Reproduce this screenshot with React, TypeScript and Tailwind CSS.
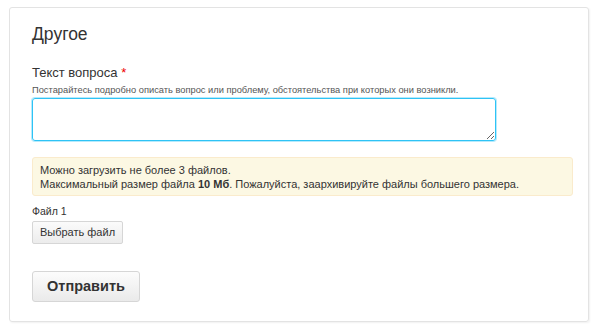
import React from 'react';

const App: React.FC = () => {
  return (
    <div className="w-[600px] h-[330px] bg-white pt-[7px] pl-[9px] font-['Liberation_Sans',Arial,sans-serif] text-[#333]">
      <div className="w-[580px] h-[315px] border border-[#e3e3e3] rounded-[3px] shadow-[1px_1px_2px_rgba(0,0,0,0.06)] pl-[22px] pt-[15px]">
        <h2 className="text-[17.5px] leading-[22px] text-[#333]">Другое</h2>

        <label className="block mt-[20px] text-[13px] leading-[16px]">
          Текст вопроса <span className="text-[#e00]">*</span>
        </label>
        <p className="mt-[4px] text-[9.3px] leading-[11px] text-[#555]">
          Постарайтесь подробно описать вопрос или проблему, обстоятельства при которых они возникли.
        </p>
        <textarea className="block mt-[2px] w-[464px] h-[43px] border border-[#2ec3f5] rounded-[3px] shadow-[0_0_0_1px_rgba(46,195,245,0.35)] outline-none resize-y" />

        <div className="mt-[16px] w-[541px] h-[39px] bg-[#fcf8e3] border border-[#faebcc] rounded-[3px] pl-[7px] pt-[5px] text-[11px] leading-[14px] text-[#333]">
          <div>Можно загрузить не более 3 файлов.</div>
          <div>
            Максимальный размер файла <b>10 Мб</b>. Пожалуйста, заархивируйте файлы большего размера.
          </div>
        </div>

        <div className="mt-[9px] text-[10.5px] leading-[12px]">Файл 1</div>
        <button className="mt-[4px] w-[91px] h-[23px] text-[11px] text-[#333] bg-gradient-to-b from-[#fbfbfb] to-[#ececec] border border-[#d6d6d6] rounded-[2px]">
          Выбрать файл
        </button>

        <div>
          <button className="mt-[27px] w-[108px] h-[31px] text-[14.5px] font-bold text-[#333] bg-gradient-to-b from-[#fcfcfc] to-[#eaeaea] border border-[#d6d6d6] rounded-[3px]">
            Отправить
          </button>
        </div>
      </div>
    </div>
  );
};

export default App;
